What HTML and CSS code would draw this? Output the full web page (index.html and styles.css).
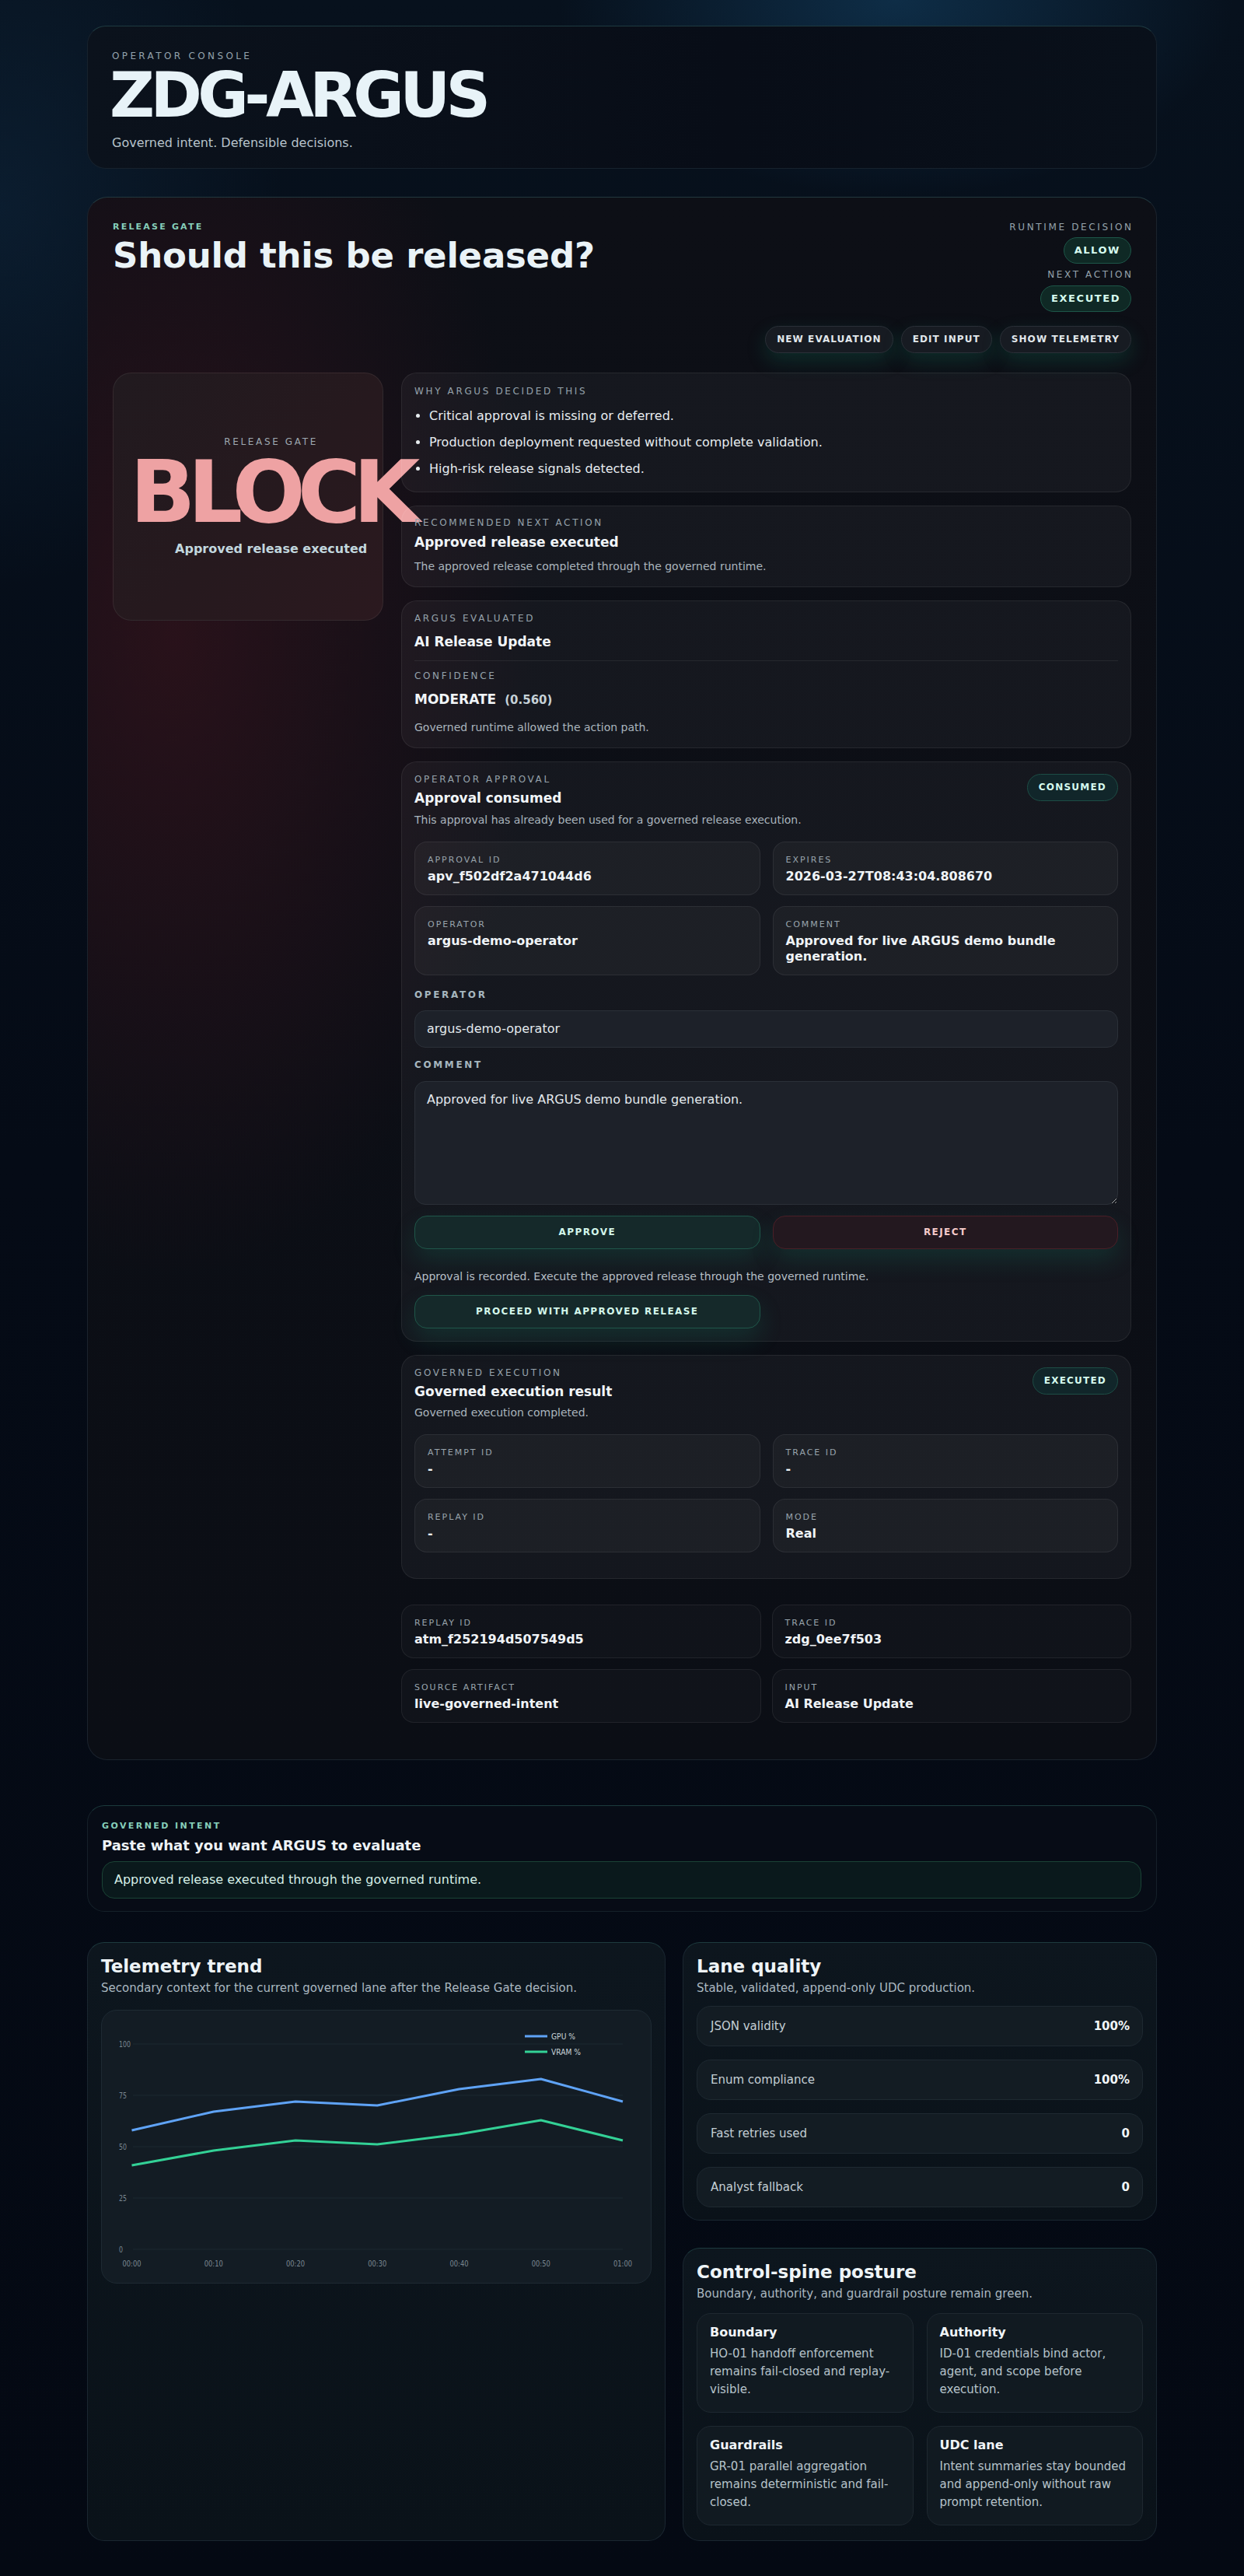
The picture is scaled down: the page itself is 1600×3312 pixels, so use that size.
FILE: index.html
```html
<!DOCTYPE html>
<html lang="en">
<head>
<meta charset="utf-8">
<title>ZDG-ARGUS Operator Console</title>
<link rel="stylesheet" href="styles.css">
</head>
<body>
<div class="page">

  <header class="hero">
    <div class="eyebrow">OPERATOR CONSOLE</div>
    <h1 class="brand">ZDG-ARGUS</h1>
    <p class="tagline">Governed intent. Defensible decisions.</p>
  </header>

  <section class="gate">
    <div class="gate-head">
      <div class="gate-title">
        <div class="kicker">RELEASE GATE</div>
        <h2 class="gate-h">Should this be released?</h2>
      </div>
      <div class="gate-status">
        <div class="lbl lbl-right">RUNTIME DECISION</div>
        <span class="pill pill-top">ALLOW</span>
        <div class="lbl lbl-right lbl-next">NEXT ACTION</div>
        <span class="pill pill-top">EXECUTED</span>
        <div class="actions">
          <button class="ghost-btn">NEW EVALUATION</button>
          <button class="ghost-btn">EDIT INPUT</button>
          <button class="ghost-btn">SHOW TELEMETRY</button>
        </div>
      </div>
    </div>

    <div class="gate-body">
      <div class="verdict">
        <div class="verdict-inner">
          <div class="lbl">RELEASE GATE</div>
          <div class="verdict-word">BLOCK</div>
          <div class="verdict-sub">Approved release executed</div>
        </div>
      </div>

      <div class="stack">
        <div class="card card-why">
          <div class="lbl">WHY ARGUS DECIDED THIS</div>
          <ul class="reasons">
            <li>Critical approval is missing or deferred.</li>
            <li>Production deployment requested without complete validation.</li>
            <li>High-risk release signals detected.</li>
          </ul>
        </div>

        <div class="card card-rec">
          <div class="lbl">RECOMMENDED NEXT ACTION</div>
          <div class="ctitle t-rec">Approved release executed</div>
          <p class="cdesc d-rec">The approved release completed through the governed runtime.</p>
        </div>

        <div class="card card-eval">
          <div class="lbl">ARGUS EVALUATED</div>
          <div class="ctitle t-gap">AI Release Update</div>
          <div class="divider"></div>
          <div class="lbl t-gap">CONFIDENCE</div>
          <div class="ctitle t-gap">MODERATE<span class="score">(0.560)</span></div>
          <p class="cdesc d-gap">Governed runtime allowed the action path.</p>
        </div>

        <div class="card card-approval">
          <div class="card-top">
            <div>
              <div class="lbl">OPERATOR APPROVAL</div>
              <div class="ctitle t-tight">Approval consumed</div>
              <p class="cdesc d-tight">This approval has already been used for a governed release execution.</p>
            </div>
            <span class="pill pill-sm">CONSUMED</span>
          </div>
          <div class="kv-grid">
            <div class="kv"><div class="kv-l">APPROVAL ID</div><div class="kv-v">apv_f502df2a471044d6</div></div>
            <div class="kv"><div class="kv-l">EXPIRES</div><div class="kv-v">2026-03-27T08:43:04.808670</div></div>
            <div class="kv"><div class="kv-l">OPERATOR</div><div class="kv-v">argus-demo-operator</div></div>
            <div class="kv"><div class="kv-l">COMMENT</div><div class="kv-v">Approved for live ARGUS demo bundle generation.</div></div>
          </div>
          <div class="field-lbl f-op">OPERATOR</div>
          <input class="field" type="text" value="argus-demo-operator">
          <div class="field-lbl f-cm">COMMENT</div>
          <textarea class="field area">Approved for live ARGUS demo bundle generation.</textarea>
          <div class="decide">
            <button class="act act-approve">APPROVE</button>
            <button class="act act-reject">REJECT</button>
          </div>
          <p class="note">Approval is recorded. Execute the approved release through the governed runtime.</p>
          <div class="decide">
            <button class="act act-approve">PROCEED WITH APPROVED RELEASE</button>
          </div>
        </div>

        <div class="card card-exec">
          <div class="card-top">
            <div>
              <div class="lbl">GOVERNED EXECUTION</div>
              <div class="ctitle t-tight">Governed execution result</div>
              <p class="cdesc d-exec">Governed execution completed.</p>
            </div>
            <span class="pill pill-sm pill-exec">EXECUTED</span>
          </div>
          <div class="kv-grid">
            <div class="kv"><div class="kv-l">ATTEMPT ID</div><div class="kv-v">-</div></div>
            <div class="kv"><div class="kv-l">TRACE ID</div><div class="kv-v">-</div></div>
            <div class="kv"><div class="kv-l">REPLAY ID</div><div class="kv-v">-</div></div>
            <div class="kv"><div class="kv-l">MODE</div><div class="kv-v">Real</div></div>
          </div>
        </div>

        <div class="kv-grid meta-grid">
          <div class="kv kv-flat"><div class="kv-l">REPLAY ID</div><div class="kv-v">atm_f252194d507549d5</div></div>
          <div class="kv kv-flat"><div class="kv-l">TRACE ID</div><div class="kv-v">zdg_0ee7f503</div></div>
          <div class="kv kv-flat"><div class="kv-l">SOURCE ARTIFACT</div><div class="kv-v">live-governed-intent</div></div>
          <div class="kv kv-flat"><div class="kv-l">INPUT</div><div class="kv-v">AI Release Update</div></div>
        </div>
      </div>
    </div>
  </section>

  <section class="intent">
    <div class="kicker kicker-sm">GOVERNED INTENT</div>
    <div class="intent-title">Paste what you want ARGUS to evaluate</div>
    <div class="intent-input">Approved release executed through the governed runtime.</div>
  </section>

  <div class="lower">
    <section class="panel">
      <div class="ptitle">Telemetry trend</div>
      <p class="psub">Secondary context for the current governed lane after the Release Gate decision.</p>
      <div class="chart">
        <svg class="chart-svg" viewBox="0 0 706 350" width="706" height="350">
          <g class="grid-lines">
            <line x1="40" y1="43" x2="670" y2="43"/>
            <line x1="40" y1="109" x2="670" y2="109"/>
            <line x1="40" y1="175" x2="670" y2="175"/>
            <line x1="40" y1="241" x2="670" y2="241"/>
            <line x1="40" y1="307" x2="670" y2="307"/>
          </g>
          <g class="tick">
            <text x="22" y="47" textLength="15" lengthAdjust="spacingAndGlyphs">100</text>
            <text x="22" y="113" textLength="10" lengthAdjust="spacingAndGlyphs">75</text>
            <text x="22" y="179" textLength="10" lengthAdjust="spacingAndGlyphs">50</text>
            <text x="22" y="245" textLength="10" lengthAdjust="spacingAndGlyphs">25</text>
            <text x="22" y="311" textLength="5" lengthAdjust="spacingAndGlyphs">0</text>
          </g>
          <g class="tick tick-x">
            <text x="38.5" y="329" textLength="24" lengthAdjust="spacingAndGlyphs">00:00</text>
            <text x="143.75" y="329" textLength="24" lengthAdjust="spacingAndGlyphs">00:10</text>
            <text x="249" y="329" textLength="24" lengthAdjust="spacingAndGlyphs">00:20</text>
            <text x="354.25" y="329" textLength="24" lengthAdjust="spacingAndGlyphs">00:30</text>
            <text x="459.5" y="329" textLength="24" lengthAdjust="spacingAndGlyphs">00:40</text>
            <text x="564.75" y="329" textLength="24" lengthAdjust="spacingAndGlyphs">00:50</text>
            <text x="670" y="329" textLength="24" lengthAdjust="spacingAndGlyphs">01:00</text>
          </g>
          <polyline class="ln ln-gpu" points="38.5,154 143.75,130 249,117 354.25,122 459.5,101 564.75,88 670,117"/>
          <polyline class="ln ln-vram" points="38.5,199 143.75,180 249,167 354.25,172 459.5,159 564.75,141 670,167"/>
          <line class="ln ln-gpu" x1="544" y1="33" x2="573" y2="33"/>
          <line class="ln ln-vram" x1="544" y1="53" x2="573" y2="53"/>
          <g class="legend">
            <text x="578" y="37" textLength="31" lengthAdjust="spacingAndGlyphs">GPU %</text>
            <text x="578" y="57" textLength="38" lengthAdjust="spacingAndGlyphs">VRAM %</text>
          </g>
        </svg>
      </div>
    </section>

    <div class="side">
      <section class="panel">
        <div class="ptitle">Lane quality</div>
        <p class="psub">Stable, validated, append-only UDC production.</p>
        <div class="lrows">
          <div class="lrow"><span>JSON validity</span><b>100%</b></div>
          <div class="lrow"><span>Enum compliance</span><b>100%</b></div>
          <div class="lrow"><span>Fast retries used</span><b>0</b></div>
          <div class="lrow"><span>Analyst fallback</span><b>0</b></div>
        </div>
      </section>

      <section class="panel panel-spine">
        <div class="ptitle">Control-spine posture</div>
        <p class="psub">Boundary, authority, and guardrail posture remain green.</p>
        <div class="spine">
          <div class="sbox"><div class="sbox-t">Boundary</div><p class="sbox-d">HO-01 handoff enforcement remains fail-closed and replay-visible.</p></div>
          <div class="sbox"><div class="sbox-t">Authority</div><p class="sbox-d">ID-01 credentials bind actor, agent, and scope before execution.</p></div>
          <div class="sbox"><div class="sbox-t">Guardrails</div><p class="sbox-d">GR-01 parallel aggregation remains deterministic and fail-closed.</p></div>
          <div class="sbox"><div class="sbox-t">UDC lane</div><p class="sbox-d">Intent summaries stay bounded and append-only without raw prompt retention.</p></div>
        </div>
      </section>
    </div>
  </div>

</div>
</body>
</html>
```

FILE: styles.css
```css
* { box-sizing: border-box; }

html, body { margin: 0; padding: 0; }

body {
  font-family: "DejaVu Sans", "Noto Sans", sans-serif;
  color: #e8eef2;
  min-height: 3312px;
  background:
    radial-gradient(ellipse 620px 360px at 72% 0%, rgba(24, 84, 128, 0.42), rgba(24, 84, 128, 0) 70%),
    radial-gradient(ellipse 520px 700px at 0% 8%, rgba(22, 62, 96, 0.28), rgba(22, 62, 96, 0) 70%),
    linear-gradient(180deg, #07111d 0%, #050b16 45%, #040913 100%);
}

.page {
  width: 1376px;
  margin: 0 auto;
  padding: 33px 0 47px;
}

/* ---------- hero ---------- */
.hero {
  height: 184px;
  border-radius: 24px;
  border: 1px solid #17222d;
  border-top-color: #1e3a40;
  background: linear-gradient(90deg, #0b121c 0%, #080d17 60%, #09101a 100%);
  padding: 30px 31px 0;
}
.eyebrow {
  font-size: 12px;
  line-height: 16px;
  letter-spacing: 0.28em;
  color: #93a2ac;
}
.brand {
  margin: 3px 0 0 -3px;
  font-size: 80px;
  line-height: 80px;
  font-weight: 700;
  letter-spacing: -0.07em;
  color: #e8f3f8;
}
.tagline {
  margin: 9px 0 0;
  font-size: 16px;
  line-height: 24px;
  color: #b7c3cb;
}

/* ---------- gate ---------- */
.gate {
  margin-top: 36px;
  border-radius: 26px;
  border: 1px solid #1b232d;
  border-top-color: #22383e;
  padding: 31px 32px 47px 32px;
  background:
    radial-gradient(ellipse 620px 1100px at 8% 28%, rgba(64, 20, 30, 0.55), rgba(64, 20, 30, 0) 75%),
    linear-gradient(180deg, #0d0f16 0%, #0b0e15 100%);
}
.gate-head {
  display: flex;
  justify-content: space-between;
  align-items: flex-start;
}
.kicker {
  font-size: 11px;
  line-height: 14px;
  font-weight: 700;
  letter-spacing: 0.2em;
  color: #86cfba;
}
.gate-h {
  margin: 5px 0 0;
  font-size: 45px;
  line-height: 50px;
  font-weight: 700;
  letter-spacing: -0.005em;
  color: #eaf3f7;
}
.gate-status {
  display: flex;
  flex-direction: column;
  align-items: flex-end;
}
.lbl {
  font-size: 12px;
  line-height: 14px;
  letter-spacing: 0.22em;
  color: #95a2ab;
}
.lbl-right { margin-right: -0.22em; }
.lbl-next { margin-top: 7px; }
.pill {
  display: inline-block;
  border-radius: 999px;
  background: #0f2925;
  border: 1px solid #1d5648;
  color: #d6fbef;
  font-weight: 700;
  white-space: nowrap;
}
.pill-top {
  margin-top: 6px;
  padding: 8px 13px;
  font-size: 13px;
  line-height: 16px;
  letter-spacing: 0.12em;
}
.lbl-next + .pill-top { margin-top: 7px; }
.actions {
  display: flex;
  gap: 10px;
  margin-top: 18px;
}
.ghost-btn {
  font-family: inherit;
  font-size: 12px;
  line-height: 15px;
  font-weight: 700;
  letter-spacing: 0.09em;
  color: #e1e7eb;
  background: #171b22;
  border: 1px solid #2a2f37;
  border-radius: 999px;
  padding: 9px 14px;
  box-shadow: 0 10px 26px rgba(18, 150, 115, 0.22);
}

.gate-body {
  margin-top: 25px;
  display: grid;
  grid-template-columns: 348px 1fr;
  gap: 23px;
  align-items: start;
}

/* verdict */
.verdict {
  height: 319px;
  border-radius: 24px;
  border: 1px solid rgba(255, 255, 255, 0.07);
  background: linear-gradient(135deg, #211a1f 0%, #26191e 55%, #2b191f 100%);
  padding: 0 21px;
  display: flex;
  align-items: center;
}
.verdict-inner {
  display: inline-flex;
  flex-direction: column;
  align-items: center;
  text-align: center;
}
.verdict-inner .lbl { color: #9ea8b0; }
.verdict-word {
  margin-top: 2px;
  font-size: 111px;
  line-height: 111px;
  font-weight: 700;
  letter-spacing: -0.09em;
  color: #eea2a3;
  white-space: nowrap;
}
.verdict-sub {
  margin-top: 7px;
  font-size: 16px;
  line-height: 22px;
  font-weight: 700;
  color: #c2d7de;
}

/* stack */
.stack {
  display: flex;
  flex-direction: column;
  gap: 17px;
}
.card {
  border-radius: 20px;
  border: 1px solid rgba(255, 255, 255, 0.07);
  background: rgba(255, 255, 255, 0.04);
  padding: 15px 16px 16px;
}
.card-why { padding: 16px 16px 17px; }
.card-rec { padding-top: 14px; }
.card-eval { padding-bottom: 16px; }
.card-exec { padding-bottom: 33px; }

.reasons {
  margin: 13px 0 0;
  padding-left: 19px;
  font-size: 16px;
  line-height: 24px;
  color: #e7ecef;
}
.reasons li + li { margin-top: 10px; }

.ctitle {
  font-size: 17px;
  line-height: 23px;
  font-weight: 700;
  color: #f1f5f8;
}
.t-rec { margin-top: 7px; }
.t-gap { margin-top: 12px; }
.t-tight { margin-top: 6px; }
.score {
  margin-left: 11px;
  font-size: 15px;
  color: #c5d1d7;
}
.cdesc {
  margin: 0;
  font-size: 14px;
  line-height: 20px;
  color: #aab5bd;
}
.d-rec { margin-top: 9px; }
.d-gap { margin-top: 13px; }
.d-tight { margin-top: 6px; }
.d-exec { margin-top: 5px; }
.divider {
  margin-top: 12px;
  border-top: 1px solid rgba(255, 255, 255, 0.07);
}

.card-top {
  display: flex;
  justify-content: space-between;
  align-items: flex-start;
}
.pill-sm {
  padding: 9px 14px;
  font-size: 12px;
  line-height: 15px;
  letter-spacing: 0.1em;
  background: #11262a;
  border-color: #1d4d45;
}

.kv-grid {
  margin-top: 18px;
  display: grid;
  grid-template-columns: 1fr 1fr;
  column-gap: 16px;
  row-gap: 14px;
}
.kv {
  border-radius: 16px;
  border: 1px solid rgba(255, 255, 255, 0.07);
  background: rgba(255, 255, 255, 0.035);
  padding: 16px 16px 13px;
}
.kv-l {
  font-size: 11px;
  line-height: 14px;
  letter-spacing: 0.18em;
  color: #98a4ac;
}
.kv-v {
  margin-top: 4px;
  font-size: 16px;
  line-height: 20px;
  font-weight: 700;
  color: #f0f4f7;
}
.meta-grid {
  margin-top: 16px;
  column-gap: 14px;
}
.kv-flat {
  background: rgba(255, 255, 255, 0.025);
}

.field-lbl {
  font-size: 12px;
  line-height: 14px;
  font-weight: 700;
  letter-spacing: 0.22em;
  color: #a6b6be;
}
.f-op { margin-top: 18px; }
.f-cm { margin-top: 15px; }
.field {
  display: block;
  width: 100%;
  margin-top: 13px;
  font-family: inherit;
  font-size: 16px;
  line-height: 20px;
  color: #e3e9ed;
  background: #1d2129;
  border: 1px solid #2b3038;
  border-radius: 14px;
  padding: 13px 15px;
  outline: none;
}
.area {
  margin-top: 14px;
  height: 159px;
  resize: vertical;
}
.decide {
  margin-top: 14px;
  display: grid;
  grid-template-columns: 1fr 1fr;
  gap: 16px;
}
.act {
  font-family: inherit;
  font-size: 12px;
  line-height: 15px;
  font-weight: 700;
  letter-spacing: 0.12em;
  border-radius: 16px;
  padding: 13px 10px;
  box-shadow: 0 14px 30px rgba(18, 140, 110, 0.2);
}
.act-approve {
  background: #15292a;
  border: 1px solid #1f5649;
  color: #d3f6ea;
}
.act-reject {
  background: #23181f;
  border: 1px solid #4a1f27;
  color: #f5caca;
}
.note {
  margin: 25px 0 0;
  font-size: 14px;
  line-height: 20px;
  color: #b5bfc5;
}

/* ---------- intent ---------- */
.intent {
  margin-top: 58px;
  border-radius: 22px;
  border: 1px solid #152029;
  border-top-color: #1b3a3c;
  background: #070c16;
  padding: 19px 19px 16px 18px;
}
.kicker-sm { letter-spacing: 0.22em; }
.intent-title {
  margin-top: 6px;
  font-size: 18px;
  line-height: 24px;
  font-weight: 700;
  color: #eef3f6;
}
.intent-input {
  margin-top: 8px;
  height: 48px;
  border-radius: 16px;
  border: 1px solid #1a4335;
  background: #0a191c;
  padding: 13px 15px;
  font-size: 16px;
  line-height: 20px;
  color: #d6efe6;
}

/* ---------- lower ---------- */
.lower {
  margin-top: 39px;
  display: grid;
  grid-template-columns: 744px 1fr;
  gap: 22px;
}
.side {
  display: flex;
  flex-direction: column;
  gap: 35px;
}
.panel {
  border-radius: 22px;
  border: 1px solid #1a2630;
  border-top-color: #1d3a3e;
  background: linear-gradient(180deg, #0d161e 0%, #0a1219 100%);
  padding: 16px 17px 16px;
}
.panel-spine { padding-bottom: 19px; }
.ptitle {
  font-size: 23px;
  line-height: 28px;
  font-weight: 700;
  color: #eef4f7;
}
.psub {
  margin: 4px 0 0;
  font-size: 15px;
  line-height: 20px;
  color: #aab8c0;
}
.chart {
  margin-top: 18px;
  height: 352px;
  border-radius: 20px;
  border: 1px solid #1e2a33;
  background: #131c24;
  overflow: hidden;
}
.chart-svg { display: block; }
.grid-lines line { stroke: #1d2830; stroke-width: 1; }
.tick text {
  font-family: "DejaVu Sans", sans-serif;
  font-size: 11px;
  fill: #7c8993;
}
.tick-x text { text-anchor: middle; }
.legend text {
  font-family: "DejaVu Sans", sans-serif;
  font-size: 11px;
  fill: #c9d4da;
}
.ln { fill: none; stroke-width: 3; stroke-linejoin: round; }
.ln-gpu { stroke: #5fa3f6; }
.ln-vram { stroke: #33d196; }

.lrows {
  margin-top: 13px;
  display: flex;
  flex-direction: column;
  gap: 17px;
}
.lrow {
  display: flex;
  justify-content: space-between;
  align-items: center;
  border-radius: 18px;
  border: 1px solid #1e2931;
  background: #131c23;
  padding: 15px 16px 15px 17px;
  font-size: 15px;
  line-height: 20px;
  color: #c3ced4;
}
.lrow b { font-weight: 700; color: #f2f6f8; }

.spine {
  margin-top: 15px;
  display: grid;
  grid-template-columns: 1fr 1fr;
  gap: 17px;
}
.sbox {
  border-radius: 18px;
  border: 1px solid #1e2830;
  background: #111a21;
  padding: 14px 16px 17px;
}
.sbox-t {
  font-size: 16px;
  line-height: 20px;
  font-weight: 700;
  color: #f0f4f7;
}
.sbox-d {
  margin: 6px 0 0;
  font-size: 15px;
  line-height: 23px;
  color: #b6c3ca;
}
```
